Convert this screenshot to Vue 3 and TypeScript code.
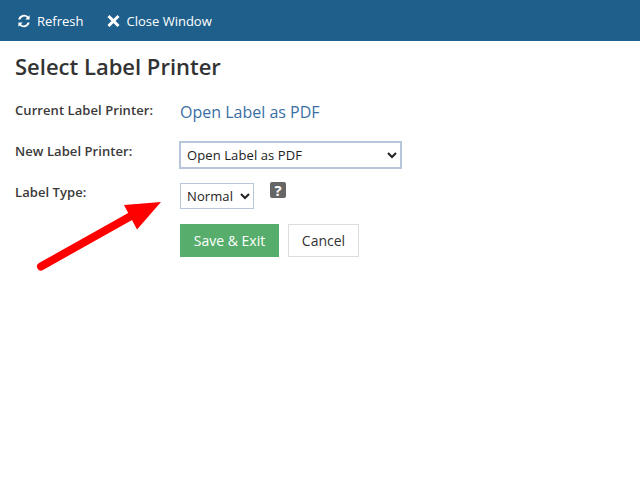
<template>
  <div class="page">
    <header class="toolbar">
      <a class="toolbar__item">
        <svg class="toolbar__icon" width="14" height="14" viewBox="0 0 14 14">
          <path d="M12.6 1.2v4.3H8.3l1.7-1.7A3.9 3.9 0 0 0 3.4 5.4H1.300A6 6 0 0 1 11.3 2.400z" fill="currentColor" />
          <path d="M1.4 12.8V8.5h4.3L4 10.2a3.9 3.9 0 0 0 6.6-1.6h2.1A6 6 0 0 1 2.7 11.6z" fill="currentColor" />
        </svg>
        Refresh
      </a>
      <a class="toolbar__item">
        <svg class="toolbar__icon" width="13" height="14" viewBox="0 0 13 14">
          <path d="M1.5 2l10 10M11.500 2l-10 10" stroke="currentColor" stroke-width="3" fill="none" />
        </svg>
        Close Window
      </a>
    </header>

    <main class="content">
      <h1 class="content__title">Select Label Printer</h1>

      <div class="form">
        <label class="form__label">Current Label Printer:</label>
        <div class="form__current">{{ currentPrinter }}</div>

        <label class="form__label">New Label Printer:</label>
        <div>
          <select v-model="newPrinter" class="select select--printer">
            <option v-for="printer in printers" :key="printer">{{ printer }}</option>
          </select>
        </div>

        <label class="form__label">Label Type:</label>
        <div class="form__type">
          <select v-model="labelType" class="select select--type">
            <option v-for="type in labelTypes" :key="type">{{ type }}</option>
          </select>
          <span class="help">?</span>
        </div>

        <div></div>
        <div class="actions">
          <button class="btn btn--save">Save &amp; Exit</button>
          <button class="btn btn--cancel">Cancel</button>
        </div>
      </div>
    </main>

    <svg class="arrow" width="640" height="479" viewBox="0 0 640 479">
      <path d="M41 266.5L131 216" stroke="#ff0000" stroke-width="8" stroke-linecap="round" fill="none" />
      <polygon points="124,205 161,202 137,229.500" fill="#ff0000" />
    </svg>
  </div>
</template>

<script setup lang="ts">
import { ref } from 'vue';

const currentPrinter = 'Open Label as PDF';
const printers = ['Open Label as PDF'];
const labelTypes = ['Normal'];

const newPrinter = ref(printers[0]);
const labelType = ref(labelTypes[0]);
</script>

<style>
html,
body {
  margin: 0;
  background: #fff;
}
</style>

<style scoped>
.page {
  position: relative;
  width: 640px;
  height: 479px;
  overflow: hidden;
  font-family: 'Open Sans', sans-serif;
  color: #333;
}

.toolbar {
  display: flex;
  align-items: center;
  gap: 24px;
  height: 41px;
  padding: 0 0 0 17px;
  box-sizing: border-box;
  background: #1f5f8b;
  color: #fff;
  font-size: 13px;
}

.toolbar__item {
  display: flex;
  align-items: center;
  gap: 6px;
}

.content {
  padding: 0 15px;
}

.content__title {
  margin: 0;
  padding-top: 11px;
  font-size: 22px;
  line-height: 29px;
  font-weight: 600;
}

.form {
  display: grid;
  grid-template-columns: 165px 1fr;
  margin-top: 20px;
}

.form__label {
  font-size: 13px;
  line-height: 18px;
  font-weight: 600;
  letter-spacing: 0.07px;
  color: #3a3a3a;
}

.form__current {
  height: 41px;
  font-size: 16px;
  line-height: 22px;
  color: #3b6fa3;
}

.form__type {
  display: flex;
  align-items: flex-start;
  gap: 16px;
}

.select {
  box-sizing: border-box;
  background: #fff;
  color: #222;
  font-family: 'Open Sans', sans-serif;
  font-size: 13px;
  letter-spacing: 0.1px;
}

.select--printer {
  display: block;
  width: 223px;
  height: 28px;
  padding: 0 1px 0 2px;
  border: 2px solid #b8c6dc;
  margin: -1px 0 14px -1px;
}

.select--type {
  width: 74px;
  height: 26px;
  padding: 0 2px 0 2px;
  border: 1px solid #b8c6dc;
}

.help {
  width: 16px;
  height: 16px;
  margin-top: -1px;
  border-radius: 2px;
  background: #666;
  color: #fff;
  font-size: 15px;
  line-height: 16px;
  font-weight: 700;
  text-align: center;
}

.actions {
  display: flex;
  gap: 9px;
  margin-top: 15px;
}

.btn {
  box-sizing: border-box;
  height: 33px;
  font-family: 'Open Sans', sans-serif;
  font-size: 14px;
}

.btn--save {
  width: 99px;
  border: none;
  background: #57ae6c;
  color: #fff;
}

.btn--cancel {
  width: 71px;
  border: 1px solid #ddd;
  background: #fff;
  color: #333;
}

.arrow {
  position: absolute;
  top: 0;
  left: 0;
  pointer-events: none;
}
</style>
